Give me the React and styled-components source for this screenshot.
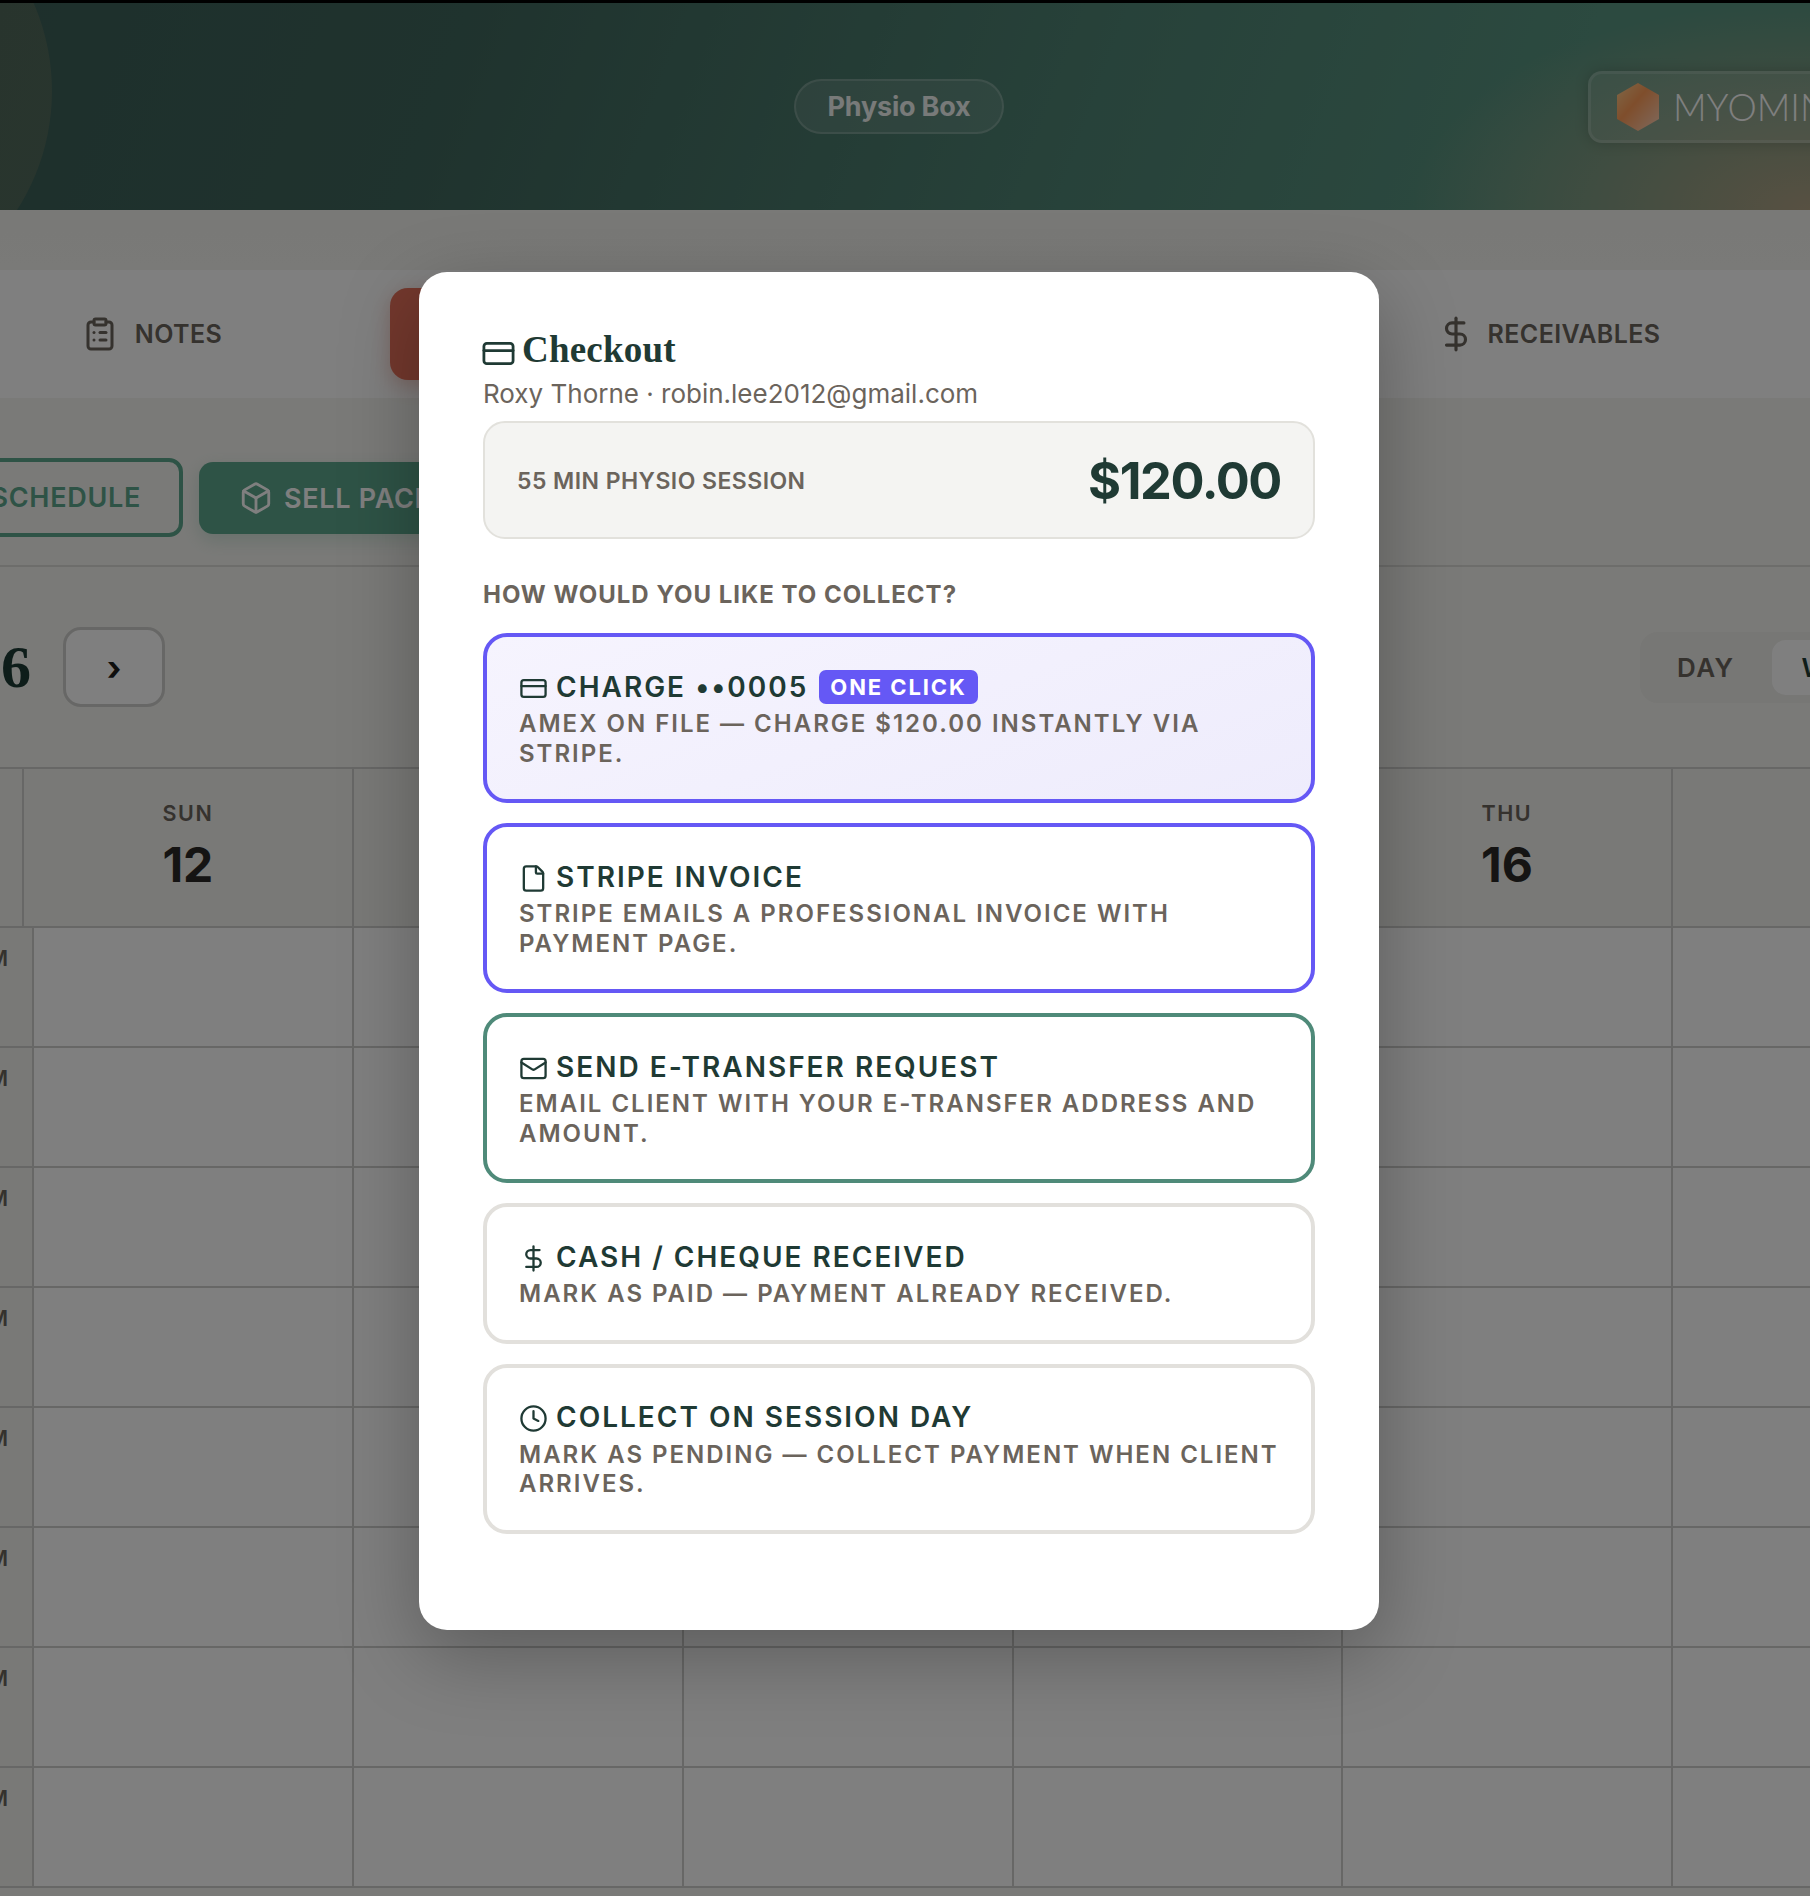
import React from "react";
import styled, { createGlobalStyle } from "styled-components";
import { Box, ClipboardList, Clock, CreditCard, DollarSign, File, Mail } from "lucide-react";

const Global = createGlobalStyle`
  html, body { margin: 0; padding: 0; background: #f5f5f1; }
  body { width: 1810px; height: 1896px; overflow: hidden; font-family: Inter, "Liberation Sans", sans-serif; }
  * { box-sizing: border-box; }
`;

const Page = styled.div`
  position: relative;
  width: 1810px;
  height: 1896px;
  overflow: hidden;
  background: linear-gradient(180deg, #f8f8f5 0, #eeeeea 60px, #f5f5f1 300px);
`;

const TopLine = styled.div`
  height: 3px;
  background: #000;
`;

const Header = styled.header`
  position: relative;
  height: 207px;
  width: 1810px;
  display: grid;
  grid-template-columns: 794px 210px 1fr;
  align-items: center;
  overflow: hidden;
  background:
    radial-gradient(ellipse 400px 210px at 100% 100%, rgba(230, 170, 135, 0.62) 0, rgba(230, 170, 135, 0) 100%),
    linear-gradient(110deg, #3c5f58 0%, #3f665c 25%, #4f8474 60%, #589480 85%);
`;

const HeaderOrb = styled.div`
  position: absolute;
  left: -388px;
  top: -132px;
  width: 440px;
  height: 440px;
  border-radius: 50%;
  background: rgba(214, 170, 110, 0.14);
`;

const Pill = styled.div`
  grid-column: 2;
  width: 210px;
  height: 55px;
  border-radius: 28px;
  display: flex;
  align-items: center;
  justify-content: center;
  font-size: 27px;
  font-weight: 700;
  color: #ffffff;
  opacity: 0.92;
  background: rgba(255, 255, 255, 0.12);
  border: 2px solid rgba(255, 255, 255, 0.2);
  letter-spacing: -0.2px;
`;

const Logo = styled.div`
  grid-column: 3;
  justify-self: start;
  margin-left: 584px;
  width: 300px;
  height: 72px;
  padding-left: 26px;
  display: flex;
  align-items: center;
  gap: 14px;
  border-radius: 14px;
  background: rgba(255, 255, 255, 0.1);
  border: 3px solid rgba(255, 255, 255, 0.15);
  box-shadow: 0 0 14px rgba(0, 0, 0, 0.18);
  flex-shrink: 0;
`;

const LogoText = styled.span`
  font-family: Lato, Inter, sans-serif;
  font-weight: 300;
  font-size: 37px;
  color: #ffffff;
  white-space: nowrap;
`;

const Nav = styled.nav`
  display: flex;
  height: 128px;
  width: 2000px;
  margin-top: 60px;
  margin-left: -81px;
  background: #ffffff;
`;

const NavTab = styled.div`
  flex: 0 0 466px;
  display: flex;
  align-items: center;
  justify-content: center;
  gap: ${(p) => p.$gap || 17}px;
  padding-right: ${(p) => p.$inset || 0}px;
  font-size: 25px;
  font-weight: 600;
  letter-spacing: 0.4px;
  color: #6b645c;
`;

const ActiveTab = styled.div`
  flex: 0 0 456px;
  margin: 18px 5px;
  border-radius: 18px;
  background: #e6705a;
  box-shadow: 0 6px 20px rgba(230, 112, 90, 0.35);
`;

const Actions = styled.div`
  height: 169px;
  margin-left: -60px;
  padding-top: 60px;
  display: flex;
  align-items: flex-start;
  gap: 16px;
  border-bottom: 2px solid #dadad6;
`;

const OutlineButton = styled.div`
  width: 243px;
  height: 79px;
  padding-right: 38px;
  display: flex;
  align-items: center;
  justify-content: flex-end;
  border: 4px solid #5da68d;
  border-radius: 14px;
  font-size: 27px;
  font-weight: 600;
  letter-spacing: 0.7px;
  color: #5da68d;
`;

const FillButton = styled.div`
  width: 420px;
  height: 72px;
  margin-top: 4px;
  padding-left: 40px;
  display: flex;
  align-items: center;
  gap: 11px;
  border-radius: 14px;
  background: #5da68d;
  box-shadow: 0 6px 18px rgba(93, 166, 141, 0.25);
  font-size: 27px;
  font-weight: 600;
  letter-spacing: 0.7px;
  color: #ffffff;
`;

const Toolbar = styled.div`
  height: 200px;
  margin-right: -60px;
  display: flex;
  align-items: center;
  gap: 32px;
`;

const RangeEnd = styled.div`
  width: 31px;
  text-align: right;
  font-family: "Liberation Serif", serif;
  font-size: 60px;
  font-weight: 700;
  color: #1c3a34;
`;

const ArrowButton = styled.div`
  width: 102px;
  height: 80px;
  display: flex;
  align-items: center;
  justify-content: center;
  border: 3px solid #cfcfcc;
  border-radius: 18px;
  background: #ffffff;
  font-size: 34px;
  font-weight: 700;
  color: #1d1c1a;
`;

const Toggle = styled.div`
  margin-left: auto;
  width: 230px;
  height: 71px;
  padding: 8px 0 8px 37px;
  display: flex;
  align-items: center;
  gap: 38px;
  border-radius: 18px;
  background: #eeeeea;
  font-size: 26px;
  font-weight: 600;
  letter-spacing: 1.4px;
  color: #6b645c;
`;

const ToggleActive = styled.div`
  flex: 1;
  height: 55px;
  padding-left: 29px;
  display: flex;
  align-items: center;
  border-radius: 14px;
  background: #ffffff;
  color: #1c3a34;
`;

const DayRow = styled.div`
  display: grid;
  grid-template-columns: 24px repeat(6, 329.75px);
  height: 161px;
  background: #f2f2ee;
  border-top: 2px solid #cfcfcc;
  border-bottom: 2px solid #cfcfcc;
`;

const DayCell = styled.div`
  padding-top: 31px;
  display: flex;
  flex-direction: column;
  align-items: center;
  border-right: 2px solid #cfcfcc;
`;

const DayName = styled.div`
  font-size: 21.5px;
  font-weight: 600;
  line-height: 26px;
  letter-spacing: 1.6px;
  color: #6b645c;
`;

const DayNumber = styled.div`
  margin-top: 10px;
  font-size: 48px;
  font-weight: 700;
  line-height: 58px;
  color: #2a2926;
`;

const TimeRow = styled.div`
  display: grid;
  grid-template-columns: 34px 320px repeat(5, 329.75px);
  height: 120px;
  background: #ffffff;
  border-bottom: 2px solid #cfcfcc;
`;

const TimeLabel = styled.div`
  overflow: hidden;
  direction: rtl;
  white-space: nowrap;
  padding-right: 24px;
  padding-top: 17px;
  font-size: 21.5px;
  font-weight: 600;
  line-height: 26px;
  background: #f2f2ee;
  border-right: 2px solid #cfcfcc;
  color: #6b645c;
`;

const Slot = styled.div`
  border-right: 2px solid #cfcfcc;
`;

const Overlay = styled.div`
  position: absolute;
  inset: 0;
  padding: 272px 12px 0 0;
  display: flex;
  justify-content: center;
  align-items: flex-start;
  background: rgba(0, 0, 0, 0.5);
`;

const Modal = styled.section`
  width: 960px;
  height: 1358px;
  padding: 55px 64px 96px;
  border-radius: 28px;
  background: #ffffff;
  box-shadow: 0 24px 80px rgba(0, 0, 0, 0.28);
`;

const ModalTitle = styled.h2`
  margin: 0;
  height: 44px;
  display: flex;
  align-items: center;
  gap: 6px;
  font-family: "Liberation Serif", serif;
  font-size: 37px;
  font-weight: 700;
  letter-spacing: 0.2px;
  color: #1f3a34;
`;

const TitleIcon = styled.span`
  display: flex;
  margin-left: -2px;
  margin-top: 8px;
  color: #1f3a34;
`;

const Subtitle = styled.div`
  margin-top: 7px;
  font-size: 26px;
  line-height: 32px;
  color: #6b645c;
`;

const AmountBox = styled.div`
  margin-top: 11px;
  height: 118px;
  padding: 0 32px;
  display: flex;
  align-items: center;
  justify-content: space-between;
  background: #f4f4f2;
  border: 2px solid #e2e1dc;
  border-radius: 22px;
`;

const AmountLabel = styled.div`
  margin-top: 2px;
  font-size: 23px;
  font-weight: 600;
  letter-spacing: 0.45px;
  color: #6b645c;
`;

const AmountValue = styled.div`
  font-size: 50.5px;
  font-weight: 700;
  letter-spacing: -1.4px;
  color: #1f3a34;
`;

const CollectLabel = styled.div`
  margin-top: 39px;
  font-size: 24px;
  line-height: 34px;
  font-weight: 700;
  letter-spacing: 1px;
  color: #6b645c;
`;

const CardList = styled.div`
  margin-top: 21px;
  display: flex;
  flex-direction: column;
  gap: 20px;
`;

const Card = styled.div`
  padding: 26.8px 32px 31px;
  border: 4px solid ${(p) => p.$border};
  border-radius: 24px;
  background: ${(p) => p.$bg};
`;

const CardTitle = styled.div`
  display: flex;
  align-items: center;
  height: 45.6px;
  gap: 8px;
  font-size: 28px;
  font-weight: 600;
  letter-spacing: 2px;
  color: #1f3a34;
  white-space: nowrap;
`;

const CardIcon = styled.span`
  display: flex;
  width: 29px;
  margin-top: 3px;
`;

const Badge = styled.span`
  margin-left: 3px;
  height: 34px;
  padding: 0 11px;
  display: flex;
  align-items: center;
  border-radius: 7px;
  background: #6558f5;
  color: #ffffff;
  font-size: 22px;
  font-weight: 700;
  letter-spacing: 1.9px;
`;

const CardDesc = styled.div`
  font-size: 24px;
  line-height: 29.3px;
  font-weight: 600;
  letter-spacing: 2px;
  color: #6b645c;
`;

const days = ["", "SUN", "", "", "", "THU", ""];
const nums = ["", "12", "", "", "", "16", ""];
const times = ["9 AM", "10 AM", "11 AM", "12 PM", "1 PM", "2 PM", "3 PM", "4 PM"];

const indigo = "#6558f5";
const cards = [
  { icon: CreditCard, title: "CHARGE ••0005", badge: "ONE CLICK", desc: "AMEX ON FILE — CHARGE $120.00 INSTANTLY VIA STRIPE.", border: indigo, bg: "linear-gradient(160deg, #f6f4fe, #eeecfc)" },
  { icon: File, title: "STRIPE INVOICE", desc: "STRIPE EMAILS A PROFESSIONAL INVOICE WITH PAYMENT PAGE.", border: indigo, bg: "#ffffff" },
  { icon: Mail, title: "SEND E-TRANSFER REQUEST", desc: "EMAIL CLIENT WITH YOUR E-TRANSFER ADDRESS AND AMOUNT.", border: "#4f8a79", bg: "#ffffff" },
  { icon: DollarSign, title: "CASH / CHEQUE RECEIVED", desc: "MARK AS PAID — PAYMENT ALREADY RECEIVED.", border: "#e2e0dc", bg: "#ffffff" },
  { icon: Clock, title: "COLLECT ON SESSION DAY", desc: "MARK AS PENDING — COLLECT PAYMENT WHEN CLIENT ARRIVES.", border: "#e2e0dc", bg: "#ffffff" },
];

function Hexagon() {
  return (
    <svg width="42" height="48" viewBox="0 0 42 48" aria-hidden="true">
      <defs>
        <linearGradient id="hex" x1="0" y1="0" x2="1" y2="1">
          <stop offset="0" stopColor="#ffd090" />
          <stop offset="0.42" stopColor="#ff9c58" />
          <stop offset="1" stopColor="#ffd4bc" />
        </linearGradient>
      </defs>
      <polygon points="21,0 42,12 42,36 21,48 0,36 0,12" fill="url(#hex)" />
    </svg>
  );
}

export default function App() {
  return (
    <Page>
      <Global />
      <TopLine />
      <Header>
        <HeaderOrb />
        <Pill>Physio Box</Pill>
        <Logo>
          <Hexagon />
          <LogoText>MYOMIN</LogoText>
        </Logo>
      </Header>
      <Nav>
        <NavTab>
          <ClipboardList size={36} strokeWidth={2} />
          NOTES
        </NavTab>
        <ActiveTab />
        <NavTab />
        <NavTab $gap={13} $inset={3}>
          <DollarSign size={38} strokeWidth={2} />
          RECEIVABLES
        </NavTab>
      </Nav>
      <Actions>
        <OutlineButton>SCHEDULE</OutlineButton>
        <FillButton>
          <Box size={34} strokeWidth={2} />
          SELL PACKAGE
        </FillButton>
      </Actions>
      <Toolbar>
        <RangeEnd>6</RangeEnd>
        <ArrowButton>›</ArrowButton>
        <Toggle>
          DAY
          <ToggleActive>WEEK</ToggleActive>
        </Toggle>
      </Toolbar>
      <DayRow>
        {days.map((d, i) => (
          <DayCell key={i}>
            <DayName>{d}</DayName>
            <DayNumber>{nums[i]}</DayNumber>
          </DayCell>
        ))}
      </DayRow>
      {times.map((t) => (
        <TimeRow key={t}>
          <TimeLabel>M</TimeLabel>
          {[0, 1, 2, 3, 4, 5].map((c) => (
            <Slot key={c} />
          ))}
        </TimeRow>
      ))}
      <Overlay>
        <Modal>
          <ModalTitle>
            <TitleIcon>
              <CreditCard size={35} strokeWidth={1.9} />
            </TitleIcon>
            Checkout
          </ModalTitle>
          <Subtitle>Roxy Thorne · robin.lee2012@gmail.com</Subtitle>
          <AmountBox>
            <AmountLabel>55 MIN PHYSIO SESSION</AmountLabel>
            <AmountValue>$120.00</AmountValue>
          </AmountBox>
          <CollectLabel>HOW WOULD YOU LIKE TO COLLECT?</CollectLabel>
          <CardList>
            {cards.map((c) => {
              const Icon = c.icon;
              return (
                <Card key={c.title} $border={c.border} $bg={c.bg}>
                  <CardTitle>
                    <CardIcon>
                      <Icon size={29} strokeWidth={1.9} />
                    </CardIcon>
                    {c.title}
                    {c.badge && <Badge>{c.badge}</Badge>}
                  </CardTitle>
                  <CardDesc>{c.desc}</CardDesc>
                </Card>
              );
            })}
          </CardList>
        </Modal>
      </Overlay>
    </Page>
  );
}
